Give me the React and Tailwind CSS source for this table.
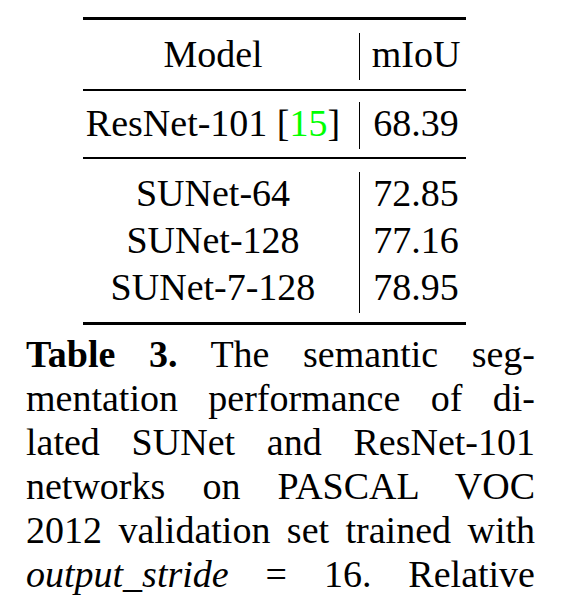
import React from 'react';

const rows = [
  ['SUNet-64', '72.85'],
  ['SUNet-128', '77.16'],
  ['SUNet-7-128', '78.95'],
];

const Row = ({ model, score }) => (
  <div className="flex h-[47px] leading-[42px]">
    <div className="w-[260px] text-center whitespace-nowrap">{model}</div>
    <div className="w-[16px]" />
    <div className="w-px bg-black" />
    <div className="flex-1 pl-[6px] text-center whitespace-nowrap">{score}</div>
  </div>
);

// one caption line, stretched to the full measure like LaTeX justification
const Line = ({ children }) => (
  <div className="text-justify [text-align-last:justify] whitespace-nowrap">{children}</div>
);

export default function App() {
  return (
    <div className="w-[574px] h-[597px] overflow-hidden bg-white text-black text-[38px] [font-family:'Liberation_Serif','Times_New_Roman',serif]">
      <div className="ml-[83px] pt-[17px] w-[383px]">
        <div className="h-[3px] bg-black" />
        <div className="mt-[13px] mb-[9px]">
          <Row model="Model" score="mIoU" />
        </div>
        <div className="h-[2px] bg-black" />
        <div className="mt-[11px] mb-[8px]">
          <Row
            model={
              <>
                ResNet-101 [<span className="text-[#00ff00]">15</span>]
              </>
            }
            score="68.39"
          />
        </div>
        <div className="h-[2px] bg-black" />
        <div className="mt-[13px] mb-[9px]">
          {rows.map(([m, s]) => (
            <Row key={m} model={m} score={s} />
          ))}
        </div>
        <div className="h-[3px] bg-black" />
      </div>

      <div className="ml-[26px] mt-[7px] w-[509px] leading-[44px]">
        <Line>
          <span className="font-bold">Table 3.</span> The semantic seg-
        </Line>
        <Line>mentation performance of di-</Line>
        <Line>lated SUNet and ResNet-101</Line>
        <Line>networks on PASCAL VOC</Line>
        <Line>2012 validation set trained with</Line>
        <Line>
          <span className="italic">output_stride</span> = 16. Relative
        </Line>
      </div>
    </div>
  );
}
